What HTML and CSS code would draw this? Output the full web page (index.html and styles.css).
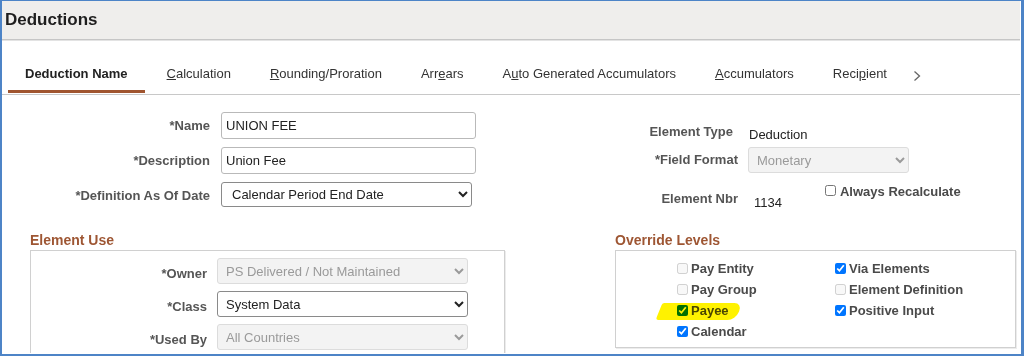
FILE: index.html
```html
<!DOCTYPE html>
<html lang="en">
<head>
    <meta charset="UTF-8">
    <meta name="viewport" content="width=device-width, initial-scale=1.0">
    <title>Deductions</title>
    <link rel="stylesheet" href="styles.css">
</head>
<body>
    <div class="frame">
        <div class="page">
            <header class="page-header">
                <h1>Deductions</h1>
            </header>

            <nav class="tabs">
                <a class="tab active">Deduction Name</a>
                <a class="tab"><u>C</u>alculation</a>
                <a class="tab"><u>R</u>ounding/Proration</a>
                <a class="tab">Arr<u>e</u>ars</a>
                <a class="tab">A<u>u</u>to Generated Accumulators</a>
                <a class="tab"><u>A</u>ccumulators</a>
                <a class="tab">Reci<u>p</u>ient</a>
                <span class="tab-more">
                    <svg width="8" height="12" viewBox="0 0 8 12"><polyline points="1.5,1.5 6.5,6 1.5,10.5" fill="none" stroke="#666" stroke-width="1.3"/></svg>
                </span>
            </nav>

            <section class="top">
                <div class="form-left">
                    <label class="flabel">*Name</label>
                    <input class="text-input" type="text" value="UNION FEE">
                    <label class="flabel">*Description</label>
                    <input class="text-input" type="text" value="Union Fee">
                    <label class="flabel">*Definition As Of Date</label>
                    <select class="select def-date">
                        <option>Calendar Period End Date</option>
                    </select>
                </div>

                <div class="form-right">
                    <div class="meta-row row-type">
                        <span class="flabel meta-label">Element Type</span>
                        <span class="meta-value type-value">Deduction</span>
                    </div>
                    <div class="meta-row row-format">
                        <span class="flabel meta-label">*Field Format</span>
                        <select class="select format-select" disabled>
                            <option>Monetary</option>
                        </select>
                    </div>
                    <div class="meta-row row-nbr">
                        <span class="flabel meta-label nbr-label">Element Nbr</span>
                        <span class="meta-value nbr-value">1134</span>
                        <label class="check recalc">
                            <input type="checkbox" class="cb-plain">
                            <span>Always Recalculate</span>
                        </label>
                    </div>
                </div>
            </section>

            <section class="groups">
                <div class="group group-use">
                    <h2 class="group-title">Element Use</h2>
                    <div class="group-box use-box">
                        <label class="flabel">*Owner</label>
                        <select class="select" disabled><option>PS Delivered / Not Maintained</option></select>
                        <label class="flabel">*Class</label>
                        <select class="select"><option>System Data</option></select>
                        <label class="flabel">*Used By</label>
                        <select class="select" disabled><option>All Countries</option></select>
                    </div>
                </div>

                <div class="group group-override">
                    <h2 class="group-title">Override Levels</h2>
                    <div class="group-box override-box">
                        <label class="check"><input type="checkbox" disabled><span>Pay Entity</span></label>
                        <label class="check"><input type="checkbox" checked><span>Via Elements</span></label>
                        <label class="check"><input type="checkbox" disabled><span>Pay Group</span></label>
                        <label class="check"><input type="checkbox" disabled><span>Element Definition</span></label>
                        <label class="check"><input type="checkbox" checked><span>Payee</span></label>
                        <label class="check"><input type="checkbox" checked><span>Positive Input</span></label>
                        <label class="check"><input type="checkbox" checked><span>Calendar</span></label>
                        <span class="marker"></span>
                    </div>
                </div>
            </section>
        </div>
    </div>
</body>
</html>
```

FILE: styles.css
```css
body {
    margin: 0;
    font-family: "Liberation Sans", Arial, sans-serif;
    font-size: 13px;
    color: #222;
    background: #fff;
}

.frame {
    width: 1024px;
    height: 356px;
    box-sizing: border-box;
    border: 2px solid #4d84c7;
    border-top-width: 1px;
    border-right-width: 3px;
    padding: 0 1px 1px 0;
}

.page {
    height: 100%;
    overflow: hidden;
}

/* header */

.page-header {
    height: 38px;
    background-color: #efeeec;
    border-bottom: 1px solid #c6c6c6;
    box-shadow: 0 1px 0 #e3e3e3;
}

.page-header h1 {
    margin: 0;
    padding-left: 3px;
    font-size: 17px;
    line-height: 38px;
    color: #1e1e1e;
}

/* tabs */

.tabs {
    display: flex;
    align-items: flex-end;
    gap: 5px;
    padding: 26px 0 1px 6px;
    border-bottom: 1px solid #c8c8c8;
}

.tab {
    padding: 0 17px 8px 17px;
    line-height: 16px;
    color: #333;
    border-bottom: 3px solid transparent;
    white-space: nowrap;
}

.tab.active {
    font-weight: bold;
    color: #222;
    border-bottom-color: #a0552f;
}

.tab-more {
    display: flex;
    align-items: center;
    height: 16px;
    margin: 0 0 6px 4px;
    padding-bottom: 3px;
}

/* top form */

.top {
    display: flex;
    height: 137px;
    box-sizing: border-box;
    padding-top: 17px;
}

.flabel {
    font-weight: bold;
    color: #555;
    text-align: right;
    line-height: 16px;
}

.form-left {
    display: grid;
    grid-template-columns: 208px 255px;
    grid-auto-rows: 27px;
    column-gap: 11px;
    row-gap: 8px;
    align-items: center;
}

.text-input {
    height: 27px;
    box-sizing: border-box;
    border: 1px solid #b9b9b9;
    border-radius: 3px;
    padding: 0 4px;
    font-family: inherit;
    font-size: 13px;
    color: #222;
}

.select {
    height: 26px;
    box-sizing: border-box;
    border: 1px solid #8a8a8a;
    border-radius: 3px;
    padding: 0 4px;
    font-family: inherit;
    font-size: 13px;
    color: #222;
    background-color: #fff;
}

.select:disabled {
    border-color: #dcdcdc;
    background-color: #f3f3f3;
    color: #9a9a9a;
    opacity: 1;
}

.def-date {
    width: 251px;
    height: 25px;
    margin-top: -2px;
    padding-left: 6px;
}

.form-right {
    margin: 12px 0 0 132px;
}

.meta-row {
    display: flex;
    align-items: flex-start;
}

.meta-label {
    width: 130px;
    flex-shrink: 0;
    margin-right: 11px;
}

.meta-value {
    line-height: 16px;
    color: #222;
}

.row-type .meta-label {
    padding-right: 5px;
    box-sizing: border-box;
}

.type-value {
    padding-top: 3px;
}

.row-format {
    align-items: center;
    margin-top: 4px;
}

.format-select {
    width: 161px;
    margin-left: -1px;
}

.row-nbr {
    margin-top: 11px;
}

.nbr-label {
    padding-top: 7px;
}

.nbr-value {
    padding: 11px 0 0 5px;
}

.recalc {
    margin-left: 43px;
}

/* checkboxes */

.check {
    display: flex;
    align-items: center;
    gap: 4px;
    font-weight: bold;
    color: #4a4a4a;
    line-height: 16px;
    white-space: nowrap;
}

.check input {
    width: 11px;
    height: 11px;
    margin: 0;
}

.cb-plain {
    position: relative;
    top: -2px;
}

/* groups */

.groups {
    display: flex;
    padding-left: 28px;
}

.group-title {
    margin: 0 0 2px 0;
    font-size: 14px;
    line-height: 16px;
    color: #9e5633;
}

.group-box {
    border: 1px solid #d0d0d0;
    box-shadow: 1px 1px 0 #ececec;
}

.group-use {
    width: 475px;
}

.use-box {
    display: grid;
    grid-template-columns: 176px 251px;
    grid-auto-rows: 26px;
    column-gap: 10px;
    row-gap: 7px;
    align-items: center;
    padding: 7px 0 20px 0;
}

.use-box .flabel {
    padding-top: 6px;
}

.group-override {
    width: 401px;
    margin-left: 110px;
}

.override-box {
    position: relative;
    display: grid;
    grid-template-columns: 158px auto;
    grid-auto-rows: 21px;
    align-items: center;
    padding: 7px 0 5px 61px;
}

.override-box .check {
    gap: 3px;
}

.marker {
    position: absolute;
    left: 43px;
    top: 52px;
    width: 80px;
    height: 17px;
    background-color: #fff200;
    border-radius: 2px 8px 8px 3px;
    transform: skewX(-22deg);
    mix-blend-mode: multiply;
}
```
